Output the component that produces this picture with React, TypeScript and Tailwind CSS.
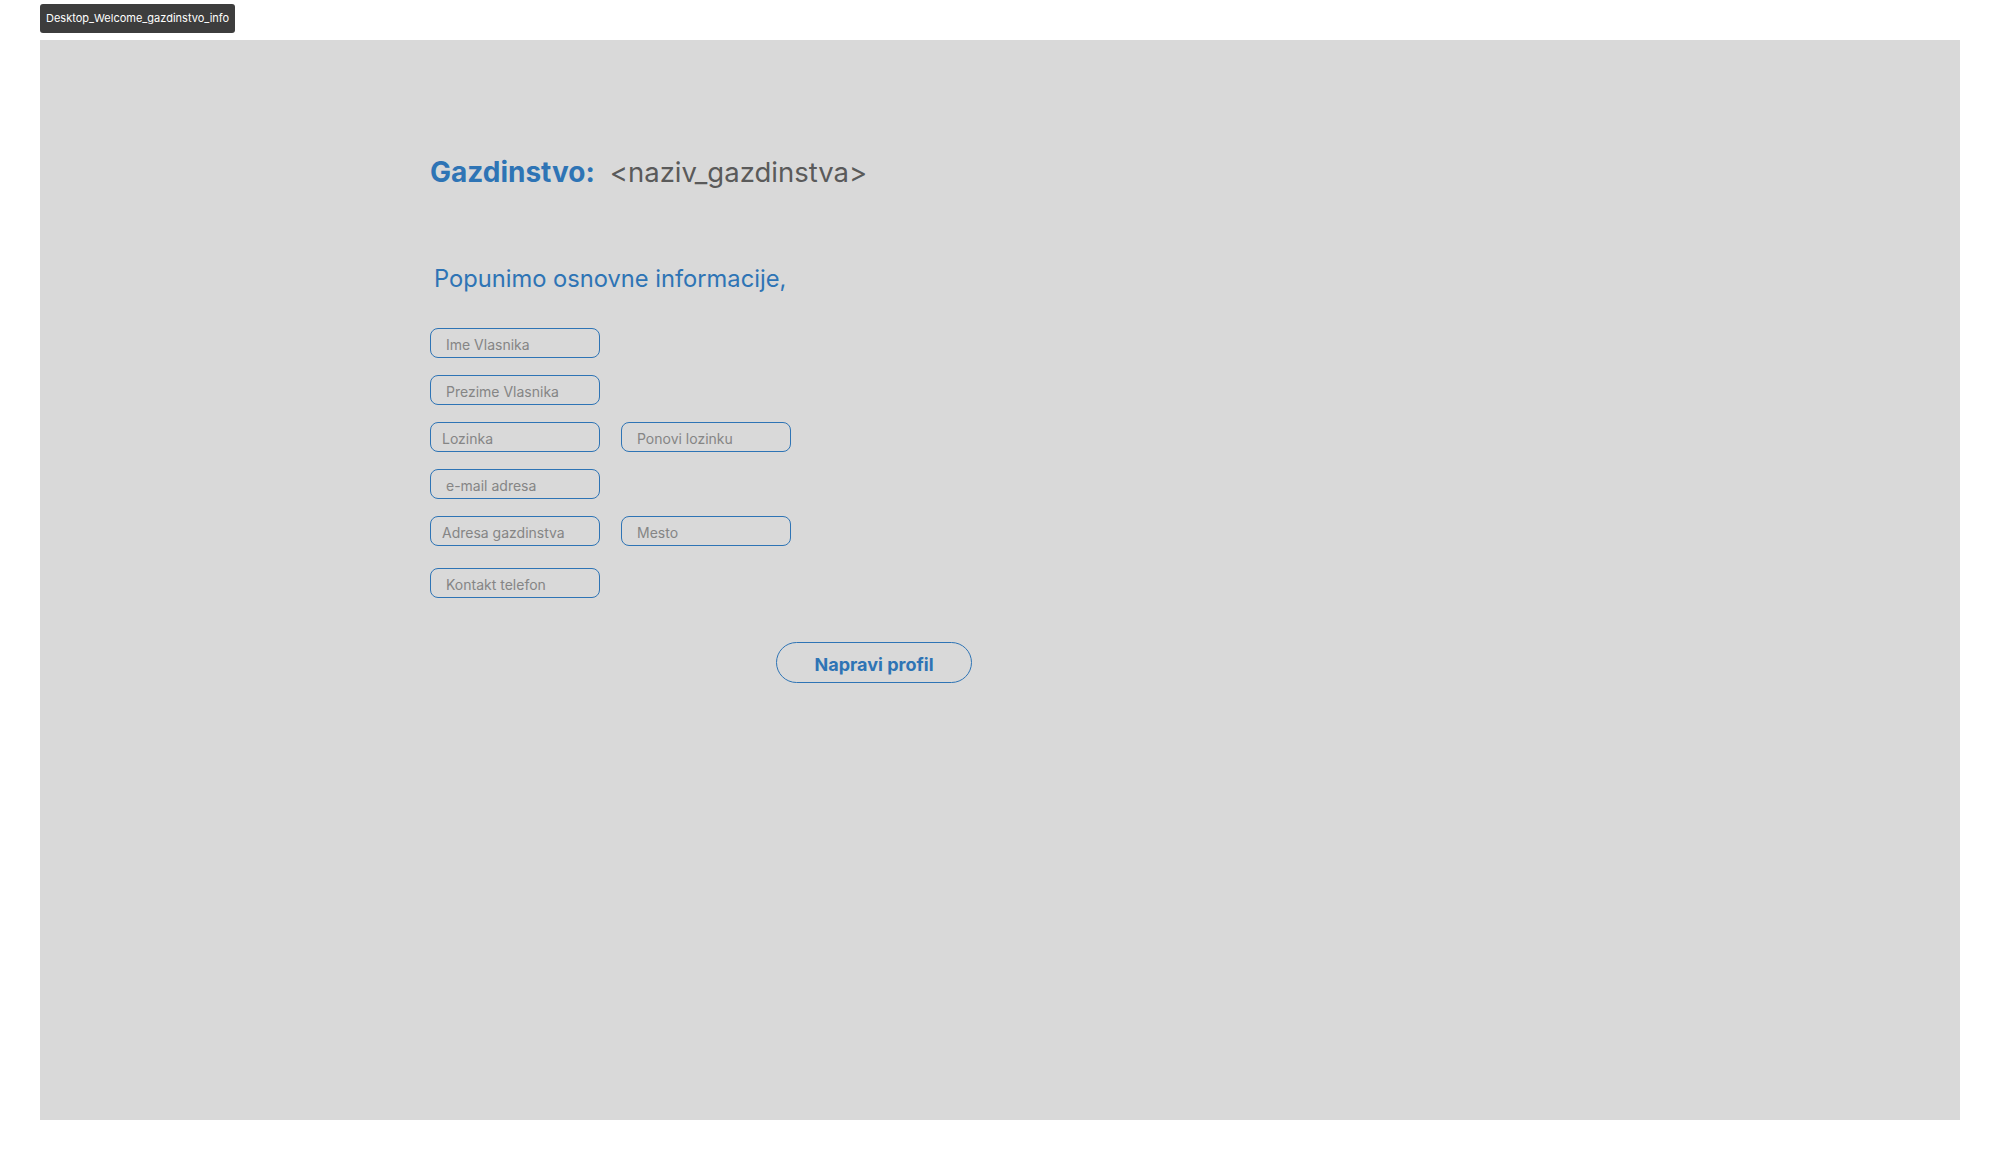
import React from "react";

type Field = { label: string; pad: string };

// rows of the form; some rows carry a second field on the right
const ROWS: { fields: Field[]; extra?: boolean }[] = [
  { fields: [{ label: "Ime Vlasnika", pad: "pl-[15px]" }] },
  { fields: [{ label: "Prezime Vlasnika", pad: "pl-[15px]" }] },
  {
    fields: [
      { label: "Lozinka", pad: "pl-[11px]" },
      { label: "Ponovi lozinku", pad: "pl-[15px]" },
    ],
  },
  { fields: [{ label: "e-mail adresa", pad: "pl-[15px]" }] },
  {
    fields: [
      { label: "Adresa gazdinstva", pad: "pl-[11px]" },
      { label: "Mesto", pad: "pl-[15px]" },
    ],
  },
  { fields: [{ label: "Kontakt telefon", pad: "pl-[15px]" }], extra: true },
];

function TextBox({ label, pad }: Field) {
  return (
    <input
      type="text"
      placeholder={label}
      className={`w-[170px] h-[30px] rounded-[8px] border border-[#2e74b5] bg-transparent ${pad} pt-[3px] text-[14px] text-[#555] placeholder:text-[#858585] outline-none`}
    />
  );
}

export default function App() {
  return (
    <div className="w-[2000px] h-[1160px] bg-white font-['Inter',sans-serif]">
      <div className="pt-[4px] pl-[40px] h-[40px]">
        <div className="inline-flex items-center h-[29px] px-[6px] rounded-[3px] bg-[#3d3d3d] text-white text-[11px]">
          Desktop_Welcome_gazdinstvo_info
        </div>
      </div>

      <div className="ml-[40px] w-[1920px] h-[1080px] bg-[#d9d9d9] pl-[390px] pt-[115px]">
        <h1 className="flex items-baseline leading-[34px]">
          <span className="text-[28px] font-bold text-[#2e74b5]">Gazdinstvo:</span>
          <span className="ml-[15px] text-[27.5px] text-[#5a5a5a]">&lt;naziv_gazdinstva&gt;</span>
        </h1>

        <p className="mt-[75px] ml-[4px] text-[23.7px] leading-[29px] text-[#2e74b5]">
          Popunimo osnovne informacije,
        </p>

        <div className="mt-[35px] flex flex-col gap-[17px]">
          {ROWS.map((row, i) => (
            <div key={i} className={`flex gap-[21px] ${row.extra ? "mt-[5px]" : ""}`}>
              {row.fields.map((f) => (
                <TextBox key={f.label} {...f} />
              ))}
            </div>
          ))}
        </div>

        <button className="mt-[44px] ml-[346px] w-[196px] h-[41px] pt-[3px] rounded-full border border-[#2e74b5] text-[18px] font-bold text-[#2e74b5]">
          Napravi profil
        </button>
      </div>
    </div>
  );
}
